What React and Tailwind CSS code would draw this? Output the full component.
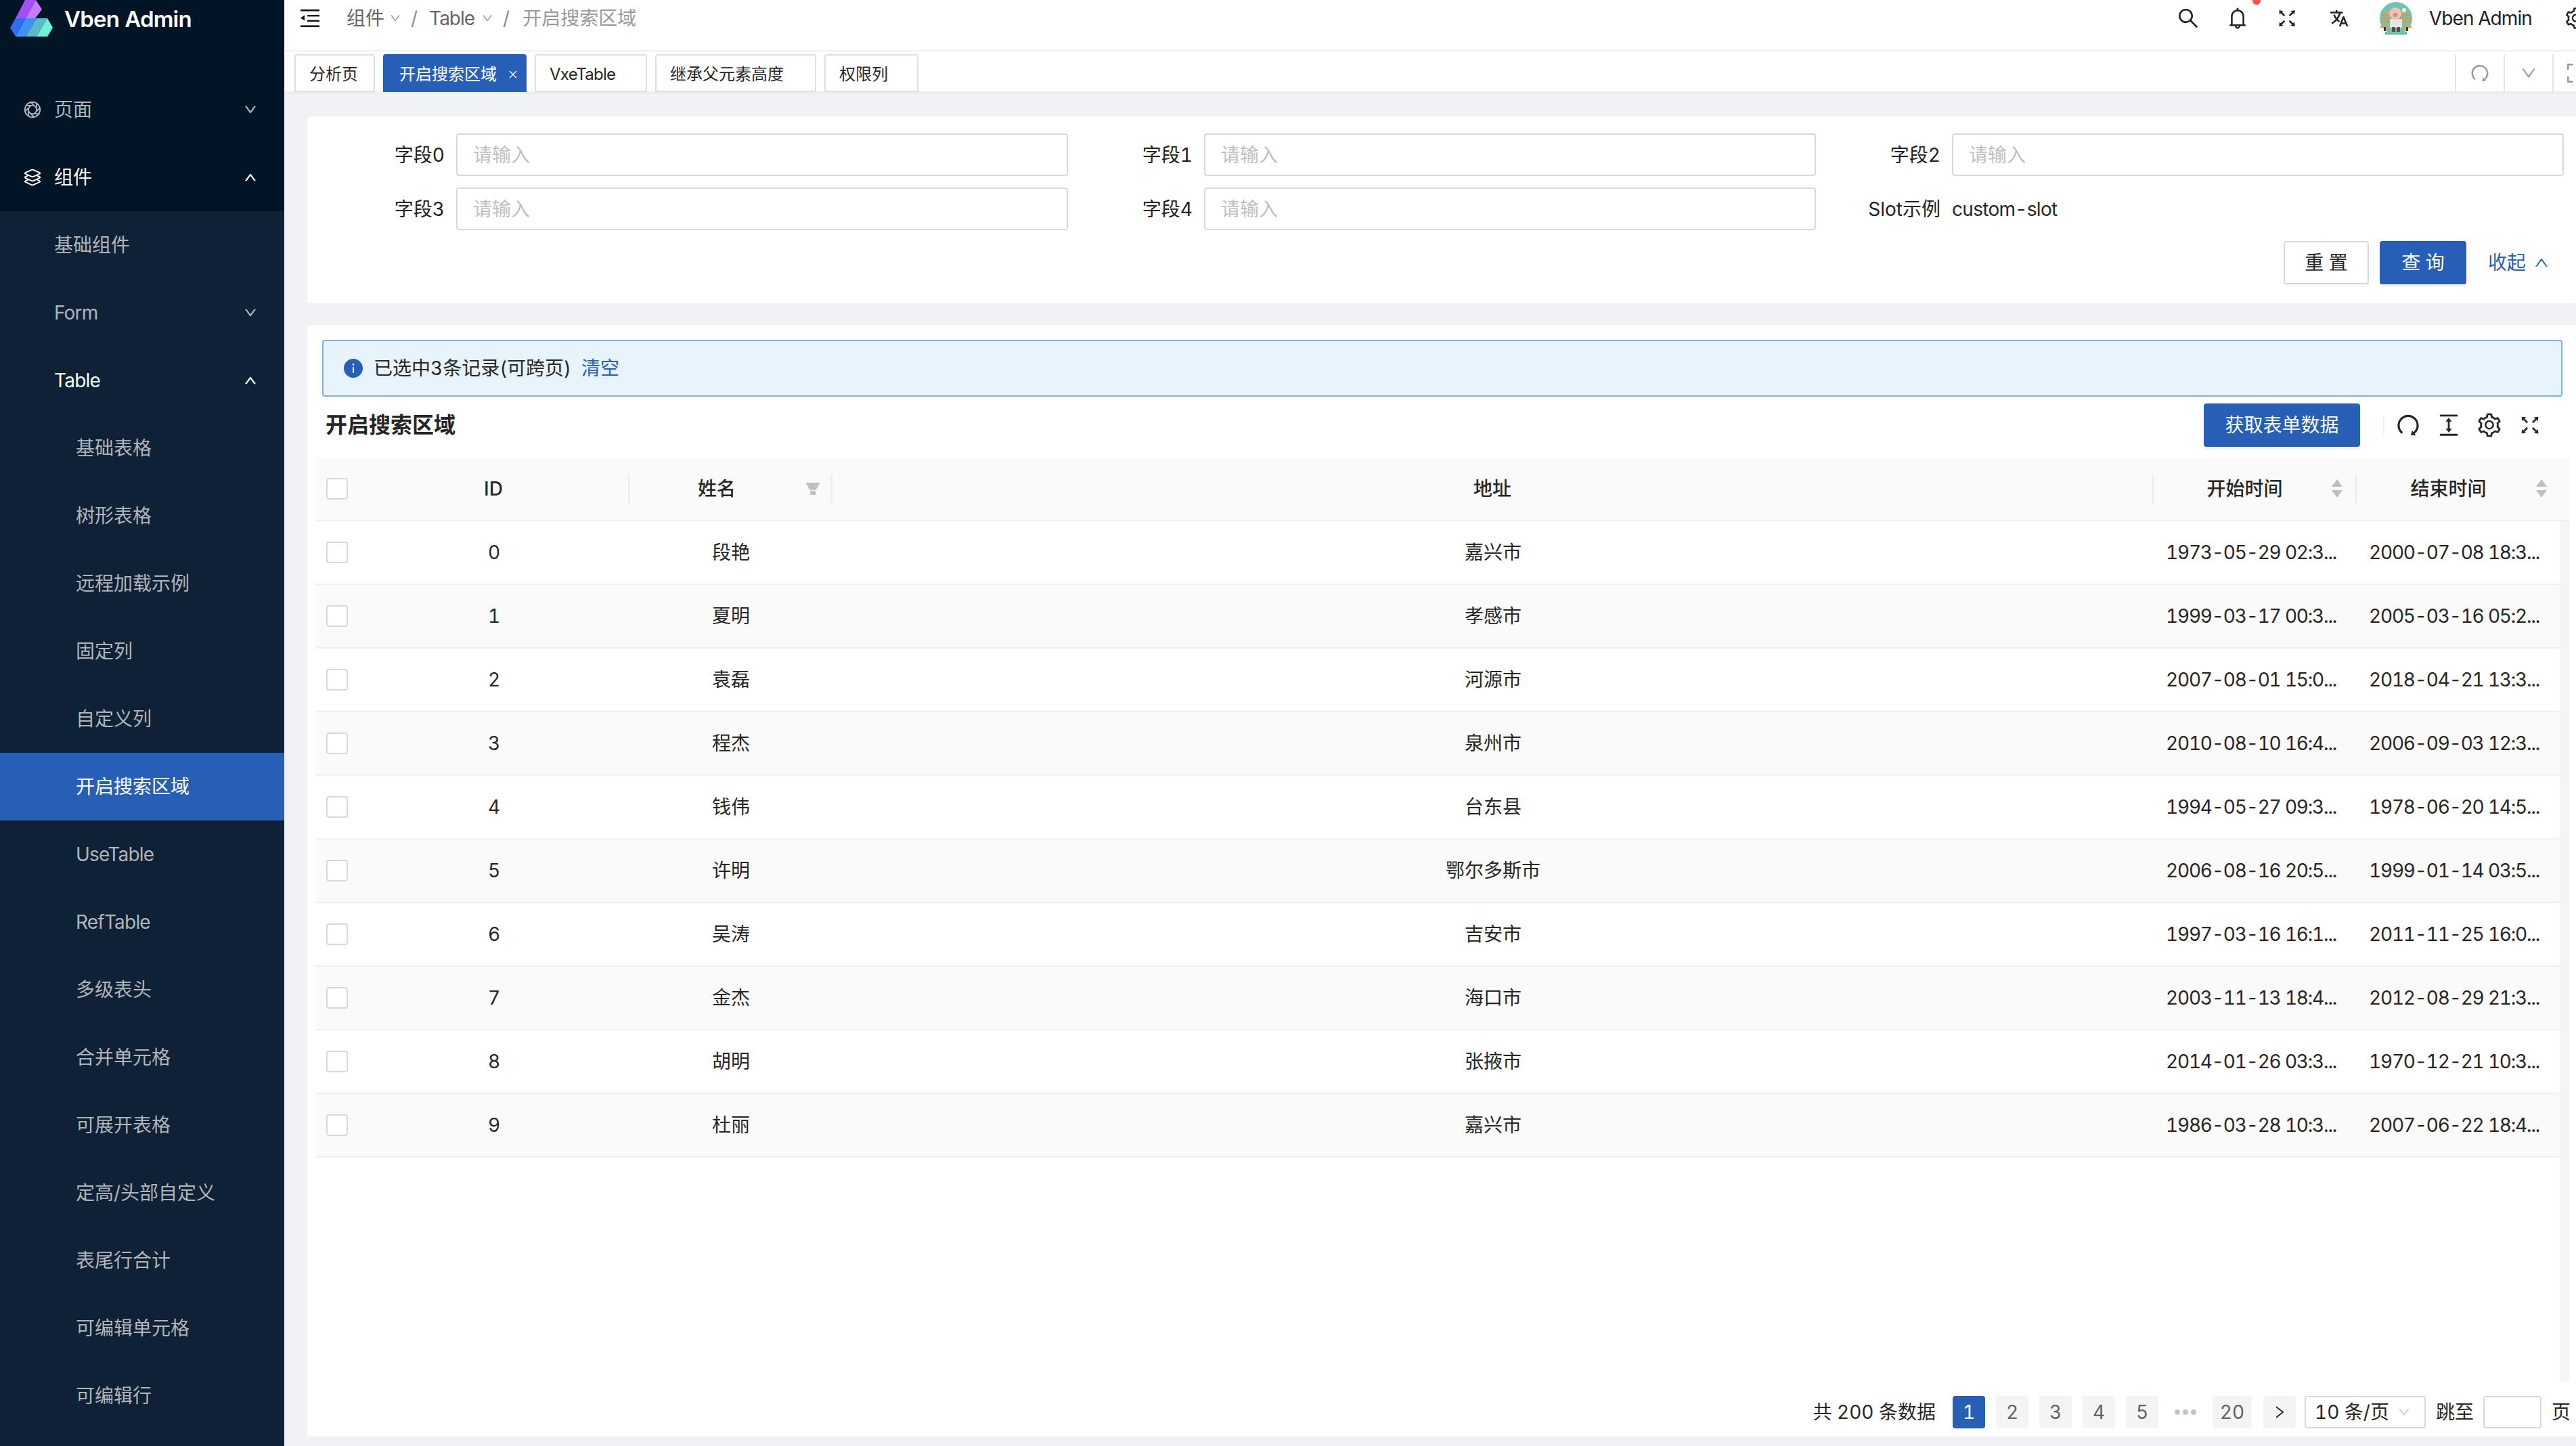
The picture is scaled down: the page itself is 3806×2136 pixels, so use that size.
import React from "react";
import {
  AiOutlineSearch, AiOutlineBell, AiOutlineFullscreen, AiOutlineRedo,
  AiOutlineDown, AiOutlineUp, AiOutlineColumnHeight, AiOutlineSetting, AiFillInfoCircle,
  AiFillFilter, AiOutlineRight, AiOutlineExpand, AiOutlineClose,
} from "react-icons/ai";
import { IoApertureOutline, IoLayersOutline, IoLanguage } from "react-icons/io5";

const FONT = { fontFamily: 'Inter, "Noto Sans CJK SC", sans-serif' };

const subItems = ["基础表格", "树形表格", "远程加载示例", "固定列", "自定义列", "开启搜索区域", "UseTable", "RefTable", "多级表头", "合并单元格", "可展开表格", "定高/头部自定义", "表尾行合计", "可编辑单元格", "可编辑行"];

const rows = [
  [0, "段艳", "嘉兴市", "1973-05-29 02:3...", "2000-07-08 18:3..."],
  [1, "夏明", "孝感市", "1999-03-17 00:3...", "2005-03-16 05:2..."],
  [2, "袁磊", "河源市", "2007-08-01 15:0...", "2018-04-21 13:3..."],
  [3, "程杰", "泉州市", "2010-08-10 16:4...", "2006-09-03 12:3..."],
  [4, "钱伟", "台东县", "1994-05-27 09:3...", "1978-06-20 14:5..."],
  [5, "许明", "鄂尔多斯市", "2006-08-16 20:5...", "1999-01-14 03:5..."],
  [6, "吴涛", "吉安市", "1997-03-16 16:1...", "2011-11-25 16:0..."],
  [7, "金杰", "海口市", "2003-11-13 18:4...", "2012-08-29 21:3..."],
  [8, "胡明", "张掖市", "2014-01-26 03:3...", "1970-12-21 10:3..."],
  [9, "杜丽", "嘉兴市", "1986-03-28 10:3...", "2007-06-22 18:4..."],
];

function Logo() {
  return (
    <svg width="80" height="56" viewBox="0 0 80 56" className="absolute left-0 top-0">
      <polygon points="37,0 53,0 38,27 23,27" fill="#a550f6" />
      <polygon points="53,0 62,14 52,27 38,27" fill="#c67bf8" />
      <polygon points="15,41 23,27 38,27 23,54" fill="#2f6eee" />
      <polygon points="38,27 54,27 38,54 23,54" fill="#3f92fb" />
      <polygon points="54,27 70,27 54,54 38,54" fill="#5cbac8" />
      <polygon points="70,27 78,41 70,54 54,54" fill="#6ef3d6" />
    </svg>
  );
}

function Avatar() {
  return (
    <svg width="48" height="48" viewBox="0 0 48 48" className="shrink-0">
      <circle cx="24" cy="24" r="24" fill="#74c2b3" />
      <path d="M8 44 Q24 50 40 44 L40 48 L8 48 Z" fill="#5fae9f" />
      <rect x="2" y="18" width="44" height="2.5" fill="#d99a4a" />
      <rect x="1" y="23" width="46" height="2.5" fill="#d99a4a" />
      <rect x="1" y="28" width="46" height="2.5" fill="#d99a4a" />
      <rect x="1" y="35" width="46" height="3" fill="#e0a24e" />
      <rect x="6" y="37" width="3" height="6" fill="#3e3228" />
      <rect x="39" y="37" width="3" height="6" fill="#3e3228" />
      <rect x="15" y="25" width="18" height="13" rx="2" fill="#e6e6e2" />
      <rect x="18" y="37" width="5" height="7" fill="#5a4a44" />
      <rect x="25" y="37" width="5" height="7" fill="#5a4a44" />
      <circle cx="12" cy="16" r="3" fill="#d0a090" />
      <circle cx="33" cy="16" r="3" fill="#d0a090" />
      <circle cx="23" cy="17" r="9" fill="#eac3b2" />
      <ellipse cx="23" cy="19" rx="3.5" ry="3" fill="#dc8a88" />
      <circle cx="36" cy="12" r="3" fill="#eef4f2" />
    </svg>
  );
}

function MenuFoldIcon() {
  return (
    <svg width="28" height="26" viewBox="0 0 28 26" className="shrink-0" fill="#111">
      <rect x="0" y="0" width="28" height="2.6" />
      <rect x="10" y="8" width="18" height="2.4" />
      <rect x="10" y="15.6" width="18" height="2.4" />
      <rect x="0" y="23.4" width="28" height="2.6" />
      <polygon points="0,12.5 6,8.5 6,16.5" />
    </svg>
  );
}

function MenuRow({ children, icon, open, active, chevron, white, indent }) {
  const latin = /^[A-Za-z]+$/.test(children);
  return (
    <div className={`flex items-center h-[100px] shrink-0 pr-[40px] text-[28px] ${indent} ${active ? "bg-[#285fb6] text-white" : white ? "text-white" : "text-[#b0b5bc]"}`}>
      {icon}
      <span className={`flex-1 whitespace-nowrap ${latin ? "tracking-[-0.8px]" : ""}`}>{children}</span>
      {chevron && (open ? <AiOutlineUp size={20} strokeWidth={40} /> : <AiOutlineDown size={20} strokeWidth={40} />)}
    </div>
  );
}

function Sidebar() {
  return (
    <aside className="w-[420px] h-full shrink-0 bg-[#021527] flex flex-col overflow-hidden">
      <div className="relative h-[112px] shrink-0 pl-[95px] pt-[6px]">
        <Logo />
        <span className="text-[33px] leading-[44px] font-semibold text-white whitespace-nowrap tracking-[-0.8px]">Vben Admin</span>
      </div>
      <MenuRow chevron indent="pl-[33px]" icon={<IoApertureOutline size={30} className="mr-[17px] shrink-0" />}>页面</MenuRow>
      <MenuRow chevron open white indent="pl-[33px]" icon={<IoLayersOutline size={30} className="mr-[17px] shrink-0" />}>组件</MenuRow>
      <div className="bg-[#0f2134] flex-1 flex flex-col">
        <MenuRow indent="pl-[80px]">基础组件</MenuRow>
        <MenuRow chevron indent="pl-[80px]">Form</MenuRow>
        <MenuRow chevron open white indent="pl-[80px]">Table</MenuRow>
        {subItems.map((s) => (
          <MenuRow key={s} indent="pl-[112px]" active={s === "开启搜索区域"}>{s}</MenuRow>
        ))}
      </div>
    </aside>
  );
}

function Header() {
  return (
    <header className="h-[76px] shrink-0 bg-white border-b-2 border-[#f0f0f0]">
      <div className="h-[54px] flex items-center">
        <span className="ml-[24px] flex"><MenuFoldIcon /></span>
        <div className="ml-[40px] flex items-center text-[28px] text-[#666] whitespace-nowrap">
          <span>组件</span>
          <AiOutlineDown size={18} className="ml-[7px] text-[#999]" />
          <span className="ml-[14px] text-[#8c8c8c]">/</span>
          <span className="ml-[17px] tracking-[-1px]">Table</span>
          <AiOutlineDown size={18} className="ml-[10px] text-[#999]" />
          <span className="ml-[14px] text-[#8c8c8c]">/</span>
          <span className="ml-[19px] text-[#999]">开启搜索区域</span>
        </div>
        <div className="ml-auto flex items-center text-[#222]">
          <AiOutlineSearch size={36} className="mr-[37px]" />
          <span className="relative mr-[38px] flex">
            <AiOutlineBell size={36} />
            <span className="absolute left-[40px] top-[-14px] w-[12px] h-[12px] rounded-full bg-[#ef5350]" />
          </span>
          <AiOutlineFullscreen size={34} className="mr-[45px]" />
          <IoLanguage size={30} className="mr-[45px]" />
          <Avatar />
          <span className="ml-[25px] text-[28px] whitespace-nowrap tracking-[-0.9px]">Vben Admin</span>
          <span className="ml-[47px] w-[18px] overflow-hidden flex">
            <AiOutlineSetting size={36} className="shrink-0" />
          </span>
        </div>
      </div>
    </header>
  );
}

function Tab({ children, active, w, latin }) {
  return (
    <div className={`${w} h-[56px] shrink-0 flex items-center rounded-t-[4px] text-[24px] whitespace-nowrap pt-[4px] ${active ? "pl-[24px] bg-[#285fb6] text-white" : "pl-[20px] bg-white border-2 border-[#dedede] text-[#262626]"}`}>
      <span className={latin ? "tracking-[-0.7px]" : ""}>{children}</span>
      {active && <AiOutlineClose size={16} className="ml-[16px]" />}
    </div>
  );
}

function TabsBar() {
  return (
    <div className="h-[63px] shrink-0 bg-white border-b-4 border-[#ededed] flex items-start pt-[4px] pl-[15px]">
      <div className="flex gap-[12px]">
        <Tab w="w-[119px]">分析页</Tab>
        <Tab active w="w-[212px]">开启搜索区域</Tab>
        <Tab latin w="w-[166px]">VxeTable</Tab>
        <Tab w="w-[238px]">继承父元素高度</Tab>
        <Tab w="w-[139px]">权限列</Tab>
      </div>
      <div className="ml-auto flex h-[55px] text-[#999]">
        <div className="w-[72px] border-l-2 border-[#e5e5e5] flex items-center justify-center"><AiOutlineRedo size={32} /></div>
        <div className="w-[72px] border-l-2 border-[#e5e5e5] flex items-center justify-center"><AiOutlineDown size={26} /></div>
        <div className="w-[35px] border-l-2 border-[#e5e5e5] flex items-center pl-[17px] overflow-hidden"><AiOutlineExpand size={34} className="shrink-0" /></div>
      </div>
    </div>
  );
}

function Field({ label, children }) {
  return (
    <div className="flex items-center h-[63px] text-[28px]">
      <label className="w-[184px] mr-[17px] shrink-0 text-right text-[#222] whitespace-nowrap">{label}</label>
      {children}
    </div>
  );
}

function TextInput() {
  return (
    <div className="flex-1 h-[63px] border-2 border-[#d9d9d9] rounded-[4px] pl-[23px] flex items-center text-[#bfbfbf] bg-white">请输入</div>
  );
}

function SearchCard() {
  return (
    <section className="h-[276px] shrink-0 bg-white rounded-[4px] flex flex-col pt-[25px] pl-[19px] pr-[18px]">
      <div className="grid grid-cols-3 gap-y-[17px]">
        <Field label="字段0"><TextInput /></Field>
        <Field label="字段1"><TextInput /></Field>
        <Field label="字段2"><TextInput /></Field>
        <Field label="字段3"><TextInput /></Field>
        <Field label="字段4"><TextInput /></Field>
        <Field label="Slot示例"><span className="text-[#262626] tracking-[-0.7px]">custom-slot</span></Field>
      </div>
      <div className="mt-[16px] flex items-start justify-end pr-[21px] text-[28px]">
        <button className="w-[126px] h-[64px] bg-white border-2 border-[#d9d9d9] rounded-[4px] text-[#262626] shadow-[0_4px_0_rgba(0,0,0,0.02)]">重 置</button>
        <button className="ml-[16px] w-[128px] h-[64px] bg-[#285fb6] rounded-[4px] text-white shadow-[0_4px_0_rgba(0,0,0,0.04)]">查 询</button>
        <span className="ml-[32px] h-[64px] flex items-center text-[#285fb6]">收起<AiOutlineUp size={24} className="ml-[11px]" /></span>
      </div>
    </section>
  );
}

function Sort() {
  return (
    <svg width="16" height="28" viewBox="0 0 16 28" className="shrink-0">
      <polygon points="8,0 16,11 0,11" fill="#bfbfbf" />
      <polygon points="0,16 16,16 8,27" fill="#bfbfbf" />
    </svg>
  );
}

function HeadCell({ w, children }) {
  return (
    <div className={`${w} shrink-0 h-full flex items-center`}>
      <span className="flex-1 text-center font-medium">{children}</span>
      <span className="w-[2px] h-[44px] bg-[#ececec] shrink-0" />
    </div>
  );
}

function DataTable() {
  return (
    <div className="ml-[12px] mr-[10px] mt-[16px] text-[28px] text-[#262626]">
      <div className="h-[94px] bg-[#fafafa] border-b-2 border-[#f0f0f0] flex">
        <div className="w-[64px] shrink-0 flex items-center pl-[16px]">
          <span className="w-[32px] h-[32px] border-2 border-[#d9d9d9] rounded-[4px] bg-white" />
        </div>
        <HeadCell w="w-[400px]">ID</HeadCell>
        <div className="w-[300px] shrink-0 h-full flex items-center">
          <span className="flex-1 text-center font-medium">姓名</span>
          <AiFillFilter size={26} className="text-[#bfbfbf] mr-[14px]" />
          <span className="w-[2px] h-[44px] bg-[#ececec] shrink-0" />
        </div>
        <HeadCell w="flex-1">地址</HeadCell>
        <div className="w-[300px] shrink-0 h-full flex items-center">
          <span className="flex-1 text-center font-medium pl-[6px]">开始时间</span>
          <Sort />
          <span className="w-[19px]" />
          <span className="w-[2px] h-[44px] bg-[#ececec] shrink-0" />
        </div>
        <div className="w-[314px] shrink-0 h-full flex items-center pr-[14px]">
          <span className="flex-1 text-center font-medium pl-[6px]">结束时间</span>
          <Sort />
          <span className="w-[19px]" />
        </div>
      </div>
      <div className="flex h-[1272px]">
        <div className="flex-1 min-w-0">
          {rows.map((r) => (
            <div key={r[0]} className={`h-[94px] border-b-2 border-[#f0f0f0] flex items-center ${r[0] % 2 ? "bg-[#fafafa]" : "bg-white"}`}>
              <div className="w-[64px] shrink-0 pl-[16px] flex">
                <span className="w-[32px] h-[32px] border-2 border-[#d9d9d9] rounded-[4px] bg-white" />
              </div>
              <div className="w-[400px] shrink-0 text-center">{r[0]}</div>
              <div className="w-[300px] shrink-0 text-center">{r[1]}</div>
              <div className="flex-1 text-center">{r[2]}</div>
              <div className="w-[300px] shrink-0 pl-[18px] whitespace-nowrap tracking-[-1.2px]">{r[3]}</div>
              <div className="w-[300px] shrink-0 pl-[18px] whitespace-nowrap tracking-[-1.2px]">{r[4]}</div>
            </div>
          ))}
        </div>
        <div className="w-[14px] shrink-0 bg-[#f5f5f5] rounded-b-[4px]" />
      </div>
    </div>
  );
}

function PageBtn({ children, active, w = "w-[48px]" }) {
  return (
    <span className={`${w} h-[48px] shrink-0 rounded-[4px] flex items-center justify-center ${active ? "bg-[#285fb6] text-white" : "bg-[#f4f4f5] text-[#606266]"}`}>{children}</span>
  );
}

function Pagination() {
  return (
    <div className="mt-[20px] h-[48px] flex items-center justify-end pr-[8px] text-[28px] text-[#262626] whitespace-nowrap">
      <span className="mr-[25px]">共 200 条数据</span>
      <div className="flex items-center gap-[16px]">
        <PageBtn active>1</PageBtn>
        <PageBtn>2</PageBtn>
        <PageBtn>3</PageBtn>
        <PageBtn>4</PageBtn>
        <PageBtn>5</PageBtn>
      </div>
      <span className="w-[80px] flex justify-center gap-[4px]">
        <i className="w-[8px] h-[8px] rounded-full bg-[#c0c4cc]" />
        <i className="w-[8px] h-[8px] rounded-full bg-[#c0c4cc]" />
        <i className="w-[8px] h-[8px] rounded-full bg-[#c0c4cc]" />
      </span>
      <PageBtn w="w-[58px]">20</PageBtn>
      <span className="ml-[17px]"><PageBtn><AiOutlineRight size={24} className="text-[#222]" /></PageBtn></span>
      <div className="ml-[13px] w-[179px] h-[48px] border-2 border-[#d9d9d9] rounded-[4px] flex items-center pl-[13px]">
        <span>10 条/页</span>
        <AiOutlineDown size={20} className="ml-[12px] text-[#c8c8c8]" />
      </div>
      <span className="ml-[15px]">跳至</span>
      <span className="ml-[14px] w-[86px] h-[48px] border-2 border-[#d9d9d9] rounded-[4px]" />
      <span className="ml-[15px]">页</span>
    </div>
  );
}

function TableCard() {
  return (
    <section className="flex-1 min-h-0 bg-white rounded-[4px] pt-[22px] flex flex-col">
      <div className="ml-[22px] mr-[20px] h-[84px] bg-[#e6f3fb] border-2 border-[#7fb5e3] rounded-[4px] flex items-center pl-[28px] text-[28px] text-[#262626]">
        <AiFillInfoCircle size={32} className="text-[#285fb6] shrink-0" />
        <span className="ml-[14px]">已选中3条记录(可跨页)</span>
        <span className="ml-[15px] text-[#285fb6]">清空</span>
      </div>
      <div className="mt-[10px] h-[64px] flex items-center pl-[27px]">
        <h2 className="text-[32px] font-semibold text-[#262626]">开启搜索区域</h2>
        <button className="ml-auto w-[231px] h-[64px] bg-[#285fb6] text-white text-[28px] rounded-[4px] shadow-[0_4px_0_rgba(0,0,0,0.04)]">获取表单数据</button>
        <span className="ml-[34px] w-[2px] h-[26px] bg-[#f0f0f0]" />
        <div className="ml-[5px] mr-[38px] flex items-center text-[#262626]">
          <span className="w-[60px] flex justify-center"><AiOutlineRedo size={40} /></span>
          <span className="w-[60px] flex justify-center"><AiOutlineColumnHeight size={40} /></span>
          <span className="w-[60px] flex justify-center"><AiOutlineSetting size={40} /></span>
          <span className="w-[60px] flex justify-center"><AiOutlineFullscreen size={36} /></span>
        </div>
      </div>
      <DataTable />
      <Pagination />
    </section>
  );
}

export default function App() {
  return (
    <div style={FONT} className="w-[3806px] h-[2136px] flex overflow-hidden bg-[#f0f2f5] tabular-nums">
      <Sidebar />
      <main className="flex-1 min-w-0 flex flex-col">
        <Header />
        <TabsBar />
        <div className="flex-1 min-h-0 flex flex-col gap-[32px] pl-[34px] pt-[33px] pb-[14px]">
          <SearchCard />
          <TableCard />
        </div>
      </main>
    </div>
  );
}
